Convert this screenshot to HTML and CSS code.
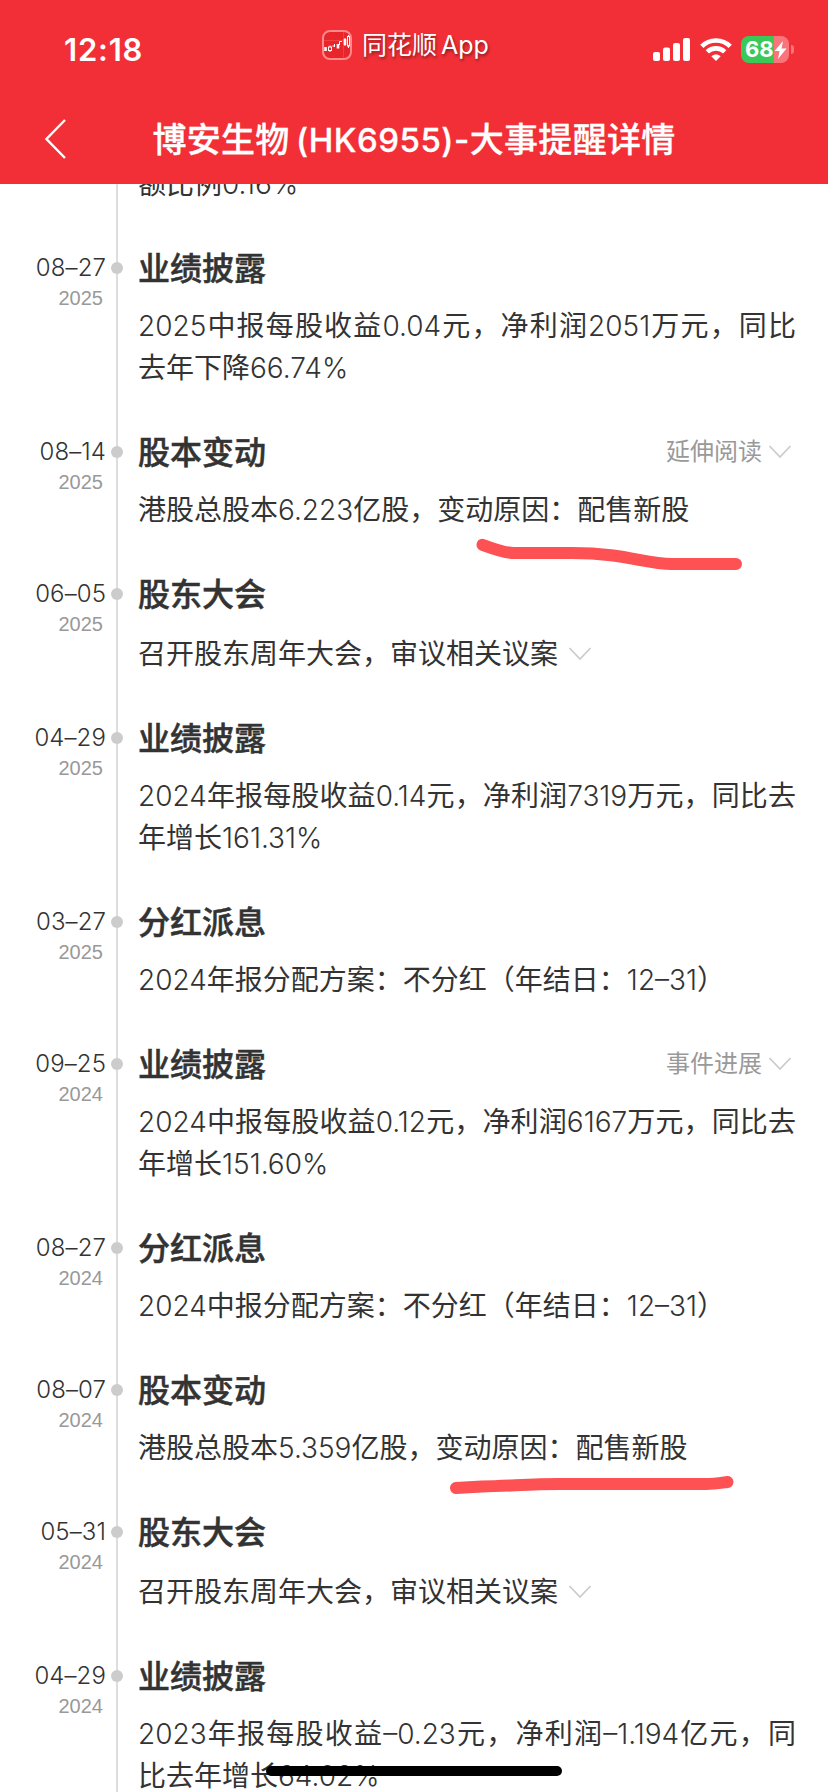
FILE: index.html
```
<!DOCTYPE html>
<html lang="zh-CN">

<head>
    <meta charset="UTF-8">
    <meta name="viewport" content="width=device-width, initial-scale=1.0">
    <title>博安生物 (HK6955)-大事提醒详情</title>
    <link rel="stylesheet" href="styles.css">
</head>

<body>
    <svg class="defs" width="0" height="0">
        <symbol id="chevron" viewBox="0 0 24 14">
            <path d="M1.5 1 L12 12 L22.5 1" fill="none" stroke="#cccccc" stroke-width="1.8" />
        </symbol>
    </svg>

    <header class="header">
        <div class="status-bar">
            <div class="time">12:18</div>
            <div class="app-tag">
                <svg class="app-icon" width="30" height="30" viewBox="0 0 30 30">
                    <rect x="1" y="1" width="28" height="28" rx="7" fill="#e8252a" stroke="#ff8a8a" stroke-width="2" />
                    <path d="M2 10.500H28M21.500 2V28" stroke="#f04040" stroke-width="1" />
                    <path d="M3.500 17v4M16 14v4.500M23 9v6" stroke="#fff" stroke-width="2.600" />
                    <path d="M10.500 16h2.500M12.500 14v3M17.500 15v-3.500h2.500M8 15.500v6.500M26.500 5v13M23 8v8" stroke="#fff" stroke-width="1" fill="none" />
                    <rect x="6.500" y="17" width="3" height="3.500" fill="#e8252a" stroke="#fff" />
                    <rect x="25.500" y="6.500" width="2" height="9.500" fill="#e8252a" stroke="#fff" />
                </svg>
                <span>同花顺 App</span>
            </div>
            <div class="indicators">
                <svg class="signal" width="38" height="24" viewBox="0 0 38 24" fill="#fff">
                    <rect x="0" y="15" width="7" height="9" rx="2" />
                    <rect x="10" y="10.500" width="7" height="13.500" rx="2" />
                    <rect x="20" y="6" width="7" height="18" rx="2" />
                    <rect x="30" y="1" width="7" height="23" rx="2" />
                </svg>
                <svg class="wifi" width="32" height="24" viewBox="0 0 32 24" fill="none" stroke="#fff" stroke-width="4.600">
                    <path d="M1.800 9.300 C9.500 1.500 22.500 1.500 30.200 9.300" />
                    <path d="M7.300 14.800 C12 10.200 20 10.200 24.700 14.800" />
                    <path d="M16 24 L11.300 19.200 C14 16.900 18 16.900 20.700 19.200 Z" fill="#fff" stroke="none" />
                </svg>
                <div class="battery">
                    <span class="level">68</span>
                    <svg class="bolt" width="13" height="18" viewBox="0 0 13 18">
                        <path d="M9 0 L0.500 10 H5.500 L4 18 L12.500 7.500 H7.500 Z" fill="#fff" />
                    </svg>
                </div>
                <div class="battery-cap"></div>
            </div>
        </div>
        <div class="nav-bar">
            <svg class="back" width="22" height="42" viewBox="0 0 22 42">
                <path d="M20 2 L1.500 21 L20 40" fill="none" stroke="#fff" stroke-width="2.400" />
            </svg>
            <h1 class="title">博安生物 <span class="code">(HK6955)-</span>大事提醒详情</h1>
        </div>
    </header>

    <main class="timeline">
        <section class="event first">
            <div class="content">
                <p class="desc">额比例<span class="num">0.16%</span></p>
            </div>
        </section>

        <section class="event">
            <div class="when"><span class="date">08–27</span><span class="year">2025</span></div>
            <div class="content">
                <div class="head"><h2>业绩披露</h2></div>
                <p class="desc"><span class="num">2025</span>中报每股收益<span class="num">0.04</span>元，净利润<span class="num">2051</span>万元，同比去年下降<span class="num">66.74%</span></p>
            </div>
        </section>

        <section class="event">
            <div class="when"><span class="date">08–14</span><span class="year">2025</span></div>
            <div class="content">
                <div class="head">
                    <h2>股本变动</h2>
                    <span class="more">延伸阅读<svg class="chevron"><use href="#chevron" /></svg></span>
                </div>
                <p class="desc">港股总股本<span class="num">6.223</span>亿股，变动原因：配售新股</p>
            </div>
        </section>

        <section class="event">
            <div class="when"><span class="date">06–05</span><span class="year">2025</span></div>
            <div class="content">
                <div class="head"><h2>股东大会</h2></div>
                <p class="desc foldable">召开股东周年大会，审议相关议案<svg class="chevron"><use href="#chevron" /></svg></p>
            </div>
        </section>

        <section class="event">
            <div class="when"><span class="date">04–29</span><span class="year">2025</span></div>
            <div class="content">
                <div class="head"><h2>业绩披露</h2></div>
                <p class="desc"><span class="num">2024</span>年报每股收益<span class="num">0.14</span>元，净利润<span class="num">7319</span>万元，同比去年增长<span class="num">161.31%</span></p>
            </div>
        </section>

        <section class="event">
            <div class="when"><span class="date">03–27</span><span class="year">2025</span></div>
            <div class="content">
                <div class="head"><h2>分红派息</h2></div>
                <p class="desc"><span class="num">2024</span>年报分配方案：不分红（年结日：<span class="num">12–31</span>）</p>
            </div>
        </section>

        <section class="event">
            <div class="when"><span class="date">09–25</span><span class="year">2024</span></div>
            <div class="content">
                <div class="head">
                    <h2>业绩披露</h2>
                    <span class="more">事件进展<svg class="chevron"><use href="#chevron" /></svg></span>
                </div>
                <p class="desc"><span class="num">2024</span>中报每股收益<span class="num">0.12</span>元，净利润<span class="num">6167</span>万元，同比去年增长<span class="num">151.60%</span></p>
            </div>
        </section>

        <section class="event">
            <div class="when"><span class="date">08–27</span><span class="year">2024</span></div>
            <div class="content">
                <div class="head"><h2>分红派息</h2></div>
                <p class="desc"><span class="num">2024</span>中报分配方案：不分红（年结日：<span class="num">12–31</span>）</p>
            </div>
        </section>

        <section class="event">
            <div class="when"><span class="date">08–07</span><span class="year">2024</span></div>
            <div class="content">
                <div class="head"><h2>股本变动</h2></div>
                <p class="desc">港股总股本<span class="num">5.359</span>亿股，变动原因：配售新股</p>
            </div>
        </section>

        <section class="event">
            <div class="when"><span class="date">05–31</span><span class="year">2024</span></div>
            <div class="content">
                <div class="head"><h2>股东大会</h2></div>
                <p class="desc foldable">召开股东周年大会，审议相关议案<svg class="chevron"><use href="#chevron" /></svg></p>
            </div>
        </section>

        <section class="event">
            <div class="when"><span class="date">04–29</span><span class="year">2024</span></div>
            <div class="content">
                <div class="head"><h2>业绩披露</h2></div>
                <p class="desc"><span class="num">2023</span>年报每股收益<span class="num">–0.23</span>元，净利润<span class="num">–1.194</span>亿元，同比去年增长<span class="num">64.02%</span></p>
            </div>
        </section>
    </main>

    <!-- marker strokes over the page -->
    <svg class="marks" width="828" height="1792" viewBox="0 0 828 1792">
        <path d="M482.500 544.800 C494 549 504 553 514 553 H572 C625 553 645 564 672 564 H736" />
        <path d="M456 1488 L482 1486.500 C510 1486 530 1484 560 1484 H706 C714 1484 720 1483 727.500 1482" />
    </svg>
    <div class="home-indicator"></div>
</body>

</html>
```

FILE: styles.css
```
* {
    box-sizing: border-box;
}

body {
    margin: 0;
    width: 828px;
    height: 1792px;
    overflow: hidden;
    position: relative;
    background: #ffffff;
    color: #333333;
    font-family: "Inter", "Noto Sans CJK SC", sans-serif;
}

h1,
h2,
p {
    margin: 0;
}

.defs {
    display: block;
}

/* header */
.header {
    position: relative;
    z-index: 1;
    height: 184px;
    background: #f22f37;
    color: #ffffff;
}

.status-bar {
    display: grid;
    grid-template-columns: 322px 1fr 175px;
    height: 96px;
}

.time {
    padding: 30px 0 0 64px;
    font-size: 31px;
    font-weight: 600;
    line-height: 40px;
    letter-spacing: 0.8px;
}

.app-tag {
    display: flex;
    gap: 10px;
    padding-top: 30px;
    font-size: 25px;
    font-weight: 400;
    line-height: 31px;
    word-spacing: -3px;
    text-shadow: 1px 2px 3px rgba(0, 0, 0, 0.45);
}

.indicators {
    display: flex;
    align-items: flex-start;
    padding-top: 36px;
}

.signal {
    margin-top: 1px;
}

.wifi {
    margin: 1px 0 0 9px;
}

.battery {
    display: flex;
    align-items: center;
    width: 48px;
    height: 27px;
    margin-left: 9px;
    padding-left: 4px;
    border-radius: 8px;
    background: linear-gradient(90deg, #3cc759 33px, #f9757b 33px);
}

.level {
    font-size: 22px;
    font-weight: 700;
    line-height: 27px;
}

.bolt {
    flex: none;
}

.battery-cap {
    width: 3px;
    height: 9px;
    margin: 9px 0 0 2px;
    border-radius: 0 4px 4px 0;
    background: #f9757b;
}

.nav-bar {
    display: grid;
    grid-template-columns: 100px 1fr 100px;
    align-items: center;
    height: 88px;
}

.back {
    margin: -2px 0 0 45px;
}

.title {
    font-size: 34px;
    font-weight: 500;
    line-height: 50px;
    text-align: center;
    white-space: nowrap;
    letter-spacing: 0.3px;
    word-spacing: -3px;
    -webkit-text-stroke: 0.3px #ffffff;
}

.code {
    font-size: 33px;
    font-weight: 550;
    letter-spacing: 0.5px;
}

/* timeline */
.timeline {
    margin-top: -21px;
    background: linear-gradient(#dddddd, #dddddd) 116px 0 / 2px 100% no-repeat;
}

.event {
    display: grid;
    grid-template-columns: 105px 33px 658px;
    padding-bottom: 41px;
}

.event::before {
    content: "";
    grid-column: 2;
    grid-row: 1;
    width: 12px;
    height: 12px;
    margin: 16px 0 0 6px;
    border-radius: 50%;
    background: #cccccc;
}

.first::before {
    visibility: hidden;
}

.when {
    grid-column: 1;
    grid-row: 1;
    display: flex;
    flex-direction: column;
    align-items: flex-end;
}

.date {
    margin-right: -1px;
    font-size: 24px;
    font-weight: 350;
    line-height: 44px;
    letter-spacing: 0.1px;
}

.year {
    margin: -1px 2px 0 0;
    color: #999999;
    font-family: "Liberation Sans", sans-serif;
    font-size: 20px;
    line-height: 18px;
}

.content {
    grid-column: 3;
    grid-row: 1;
}

.head {
    display: flex;
    justify-content: space-between;
    align-items: center;
    height: 46px;
    margin-bottom: 13px;
}

.head h2 {
    font-size: 32px;
    font-weight: 500;
    line-height: 46px;
    -webkit-text-stroke: 0.5px #333333;
}

.more {
    display: flex;
    align-items: center;
    gap: 6px;
    margin: -2px 4px 0 0;
    color: #999999;
    font-size: 24px;
    font-weight: 400;
    line-height: 44px;
}

.desc {
    font-size: 28px;
    font-weight: 400;
    line-height: 42px;
    text-align: justify;
}

.foldable {
    display: flex;
    align-items: center;
    gap: 10px;
    padding-top: 2px;
}

.num {
    font-weight: 350;
}

.chevron {
    flex: none;
    width: 24px;
    height: 14px;
}

/* overlays */
.marks {
    position: absolute;
    top: 0;
    left: 0;
    z-index: 2;
    fill: none;
    stroke: #fd5154;
    stroke-width: 12;
    stroke-linecap: round;
    stroke-linejoin: round;
}

.home-indicator {
    position: absolute;
    left: 266px;
    top: 1766px;
    z-index: 3;
    width: 296px;
    height: 10px;
    border-radius: 5px;
    background: #000000;
}
```
